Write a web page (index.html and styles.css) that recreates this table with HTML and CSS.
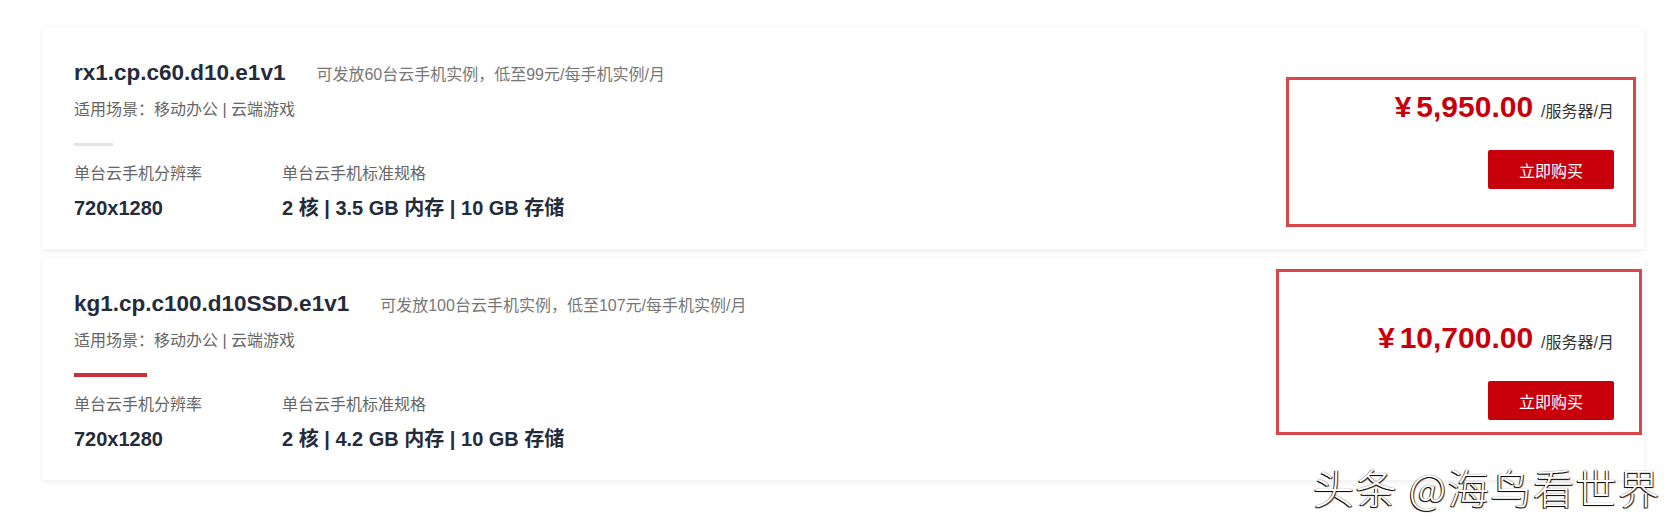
FILE: index.html
```html
<!DOCTYPE html>
<html lang="zh-CN">
<head>
    <meta charset="UTF-8">
    <meta name="viewport" content="width=device-width, initial-scale=1.0">
    <title>云手机服务器规格</title>
    <link rel="stylesheet" href="styles.css">
</head>
<body>
    <div class="list">
        <div class="card">
            <div class="info">
                <div class="head"><span class="name">rx1.cp.c60.d10.e1v1</span><span class="desc">可发放60台云手机实例，低至99元/每手机实例/月</span></div>
                <div class="scene">适用场景：移动办公 | 云端游戏</div>
                <div class="bar"></div>
                <div class="specs">
                    <div class="spec res">
                        <div class="label">单台云手机分辨率</div>
                        <div class="value">720x1280</div>
                    </div>
                    <div class="spec">
                        <div class="label">单台云手机标准规格</div>
                        <div class="value">2 核 | 3.5 GB 内存 | 10 GB 存储</div>
                    </div>
                </div>
            </div>
            <div class="buy">
                <div class="price"><span class="amount"><span class="yen">¥</span>5,950.00</span><span class="unit">/服务器/月</span></div>
                <a class="btn" href="#">立即购买</a>
            </div>
            <div class="mark mark-first"></div>
        </div>
        <div class="card active">
            <div class="info">
                <div class="head"><span class="name">kg1.cp.c100.d10SSD.e1v1</span><span class="desc">可发放100台云手机实例，低至107元/每手机实例/月</span></div>
                <div class="scene">适用场景：移动办公 | 云端游戏</div>
                <div class="bar"></div>
                <div class="specs">
                    <div class="spec res">
                        <div class="label">单台云手机分辨率</div>
                        <div class="value">720x1280</div>
                    </div>
                    <div class="spec">
                        <div class="label">单台云手机标准规格</div>
                        <div class="value">2 核 | 4.2 GB 内存 | 10 GB 存储</div>
                    </div>
                </div>
            </div>
            <div class="buy">
                <div class="price"><span class="amount"><span class="yen">¥</span>10,700.00</span><span class="unit">/服务器/月</span></div>
                <a class="btn" href="#">立即购买</a>
            </div>
            <div class="mark mark-second"></div>
        </div>
    </div>
    <div class="watermark">头条 @海鸟看世界</div>
</body>
</html>
```

FILE: styles.css
```css
body { margin: 0; background: #fff; font-family: "Liberation Sans", "Noto Sans CJK SC", sans-serif; color: #252b3a; position: relative; height: 526px; overflow: hidden; }
.list { padding: 27px 32px 0 43px; display: flex; flex-direction: column; gap: 9px; }
.card { position: relative; display: flex; height: 222px; box-sizing: border-box; padding: 31px 30px 0 31px; background: #fff; box-shadow: 0 2px 6px rgba(0, 0, 0, 0.08); }
.info { flex: 1; }
.head { line-height: 30px; white-space: nowrap; }
.name { font-size: 22.5px; font-weight: bold; color: #252b3a; }
.desc { margin-left: 31px; font-size: 16px; color: #777; }
.scene { margin-top: 9px; font-size: 16px; line-height: 22px; color: #666; }
.bar { margin-top: 22px; width: 39px; height: 3px; background: #e3e3e3; }
.active .bar { width: 73px; height: 4px; margin-top: 21px; background: #c7323a; }
.specs { display: flex; margin-top: 17px; }
.spec.res { width: 208px; }
.label { font-size: 16px; line-height: 22px; color: #666; }
.value { margin-top: 9px; font-size: 20px; line-height: 28px; font-weight: bold; color: #252b3a; }
.buy { margin-top: 31px; display: flex; flex-direction: column; align-items: flex-end; }
.price { line-height: 36px; white-space: nowrap; }
.amount { font-size: 30px; font-weight: bold; color: #c7000b; }
.yen { margin-right: 5px; }
.unit { margin-left: 8px; font-size: 16px; color: #333; }
.btn { margin-top: 20px; width: 126px; height: 39px; display: flex; align-items: center; justify-content: center; background: #c7000b; color: #fff; font-size: 16px; text-decoration: none; border-radius: 2px; }
.mark { position: absolute; border: 3px solid #d9474a; box-sizing: border-box; pointer-events: none; }
.mark-first { right: 8px; top: 50px; width: 350px; height: 150px; }
.mark-second { right: 2px; top: 11px; width: 366px; height: 166px; }
.watermark { position: absolute; left: 1313px; top: 456px; font-family: "Noto Sans CJK SC", sans-serif; font-size: 41px; font-weight: 300; color: #fff; letter-spacing: 1.6px; text-shadow: -1px 1px 0 #111, 1px 1px 1px #222, 0 0 1px #444; white-space: nowrap; }
```
